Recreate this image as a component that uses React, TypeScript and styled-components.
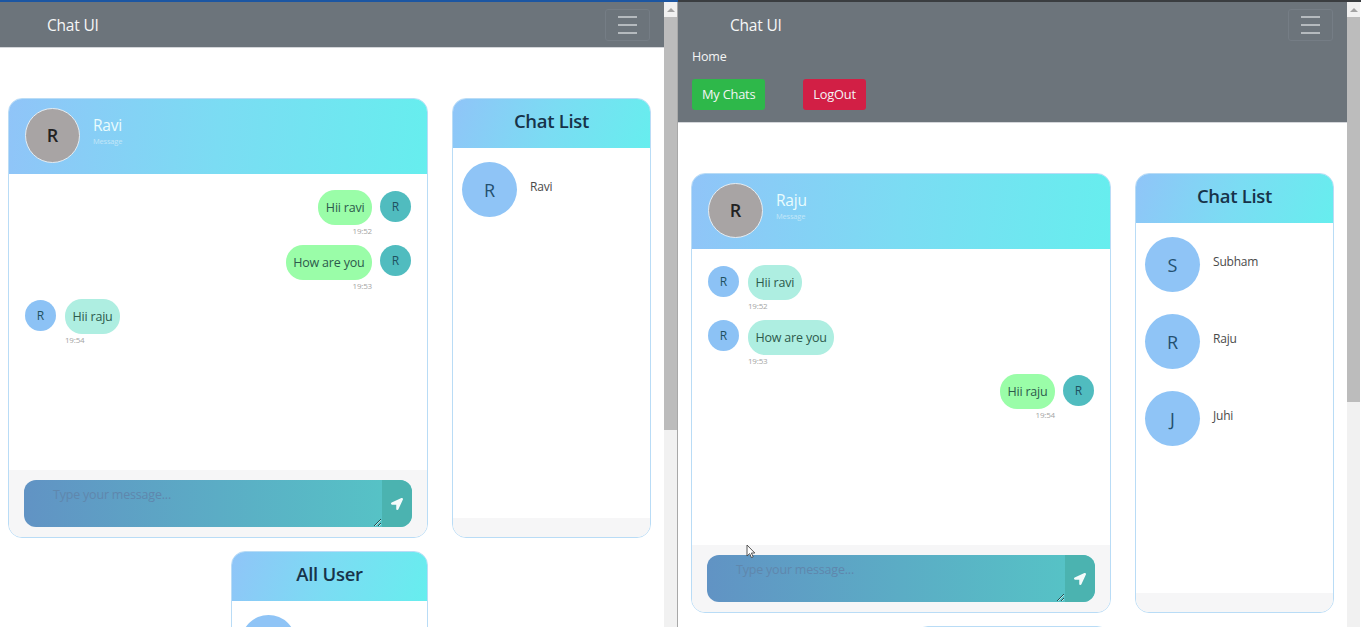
import React, { FC } from 'react'
import styled, { createGlobalStyle } from 'styled-components'
import { FaLocationArrow } from 'react-icons/fa'

const GlobalStyle = createGlobalStyle`
    html, body {
        margin: 0;
        padding: 0;
        height: 627px;
        overflow: hidden;
        background: #fff;
    }
    * {
        box-sizing: border-box;
    }
`

const Screen = styled.div`
    position: relative;
    display: grid;
    grid-template-columns: 678px 683px;
    width: 1361px;
    height: 627px;
    overflow: hidden;
    font-family: "Open Sans", "Liberation Sans", sans-serif;
`

interface PaneProps {
    $strip: string
}
const Pane = styled.div<PaneProps>`
    display: flex;
    height: 627px;
    overflow: hidden;
    border-top: 2px solid ${({ $strip }) => $strip};
`
const PageArea = styled.div`
    flex: 1;
    min-width: 0;
    overflow: hidden;
`

interface NavbarProps {
    $left: number
}
const Navbar = styled.nav<NavbarProps>`
    background: #6c747b;
    border-bottom: 1px solid #d4d6da;
    padding: 7px 14px 6px ${({ $left }) => $left}px;
`
const NavTop = styled.div`
    display: flex;
    align-items: center;
    justify-content: space-between;
    height: 32px;
    padding-left: 39px;
`
const Brand = styled.a`
    color: #f6f7f7;
    font-size: 15.5px;
    letter-spacing: -0.2px;
`
const Toggler = styled.button`
    display: flex;
    flex-direction: column;
    justify-content: center;
    gap: 6px;
    width: 45px;
    height: 32px;
    padding: 0 12px;
    background: none;
    border: 1px solid #757d85;
    border-radius: 3px;
`
const TogglerBar = styled.span`
    display: block;
    height: 2px;
    background: #b5babe;
`
const NavMenu = styled.div`
    padding: 7px 0 0 1px;
    height: 75px;
`
const NavLink = styled.a`
    display: block;
    color: #f4f5f5;
    font-size: 12.5px;
    line-height: 18px;
    letter-spacing: -0.2px;
`
const NavActions = styled.div`
    display: flex;
    gap: 38px;
    margin-top: 13px;
`

interface NavButtonProps {
    $color: string
}
const NavButton = styled.button<NavButtonProps>`
    height: 31px;
    padding: 0 10px 1px;
    border: none;
    border-radius: 3px;
    color: #f4f5f5;
    background: ${({ $color }) => $color};
    font-family: inherit;
    font-size: 12.8px;
    letter-spacing: -0.2px;
`

interface ContentProps {
    $left: number
}
const Content = styled.main<ContentProps>`
    display: grid;
    grid-template-columns: 420px 199px;
    column-gap: 24px;
    row-gap: 13px;
    padding: 50px 0 0 ${({ $left }) => $left}px;
`

const ChatCard = styled.section`
    display: flex;
    flex-direction: column;
    height: 440px;
    background: #fff;
    border: 1px solid #b9dcf6;
    border-radius: 14px;
    overflow: hidden;
`
const ChatHeader = styled.header`
    display: flex;
    align-items: center;
    gap: 13px;
    flex-shrink: 0;
    height: 76px;
    margin: -1px -1px 0;
    padding: 0 17px 2px;
    background: linear-gradient(96deg, #90c4f8 0%, #7bdcf3 50%, #66eeee 100%);
`
const HeaderAvatar = styled.div`
    display: flex;
    align-items: center;
    justify-content: center;
    width: 55px;
    height: 55px;
    border: 1px solid #e4ecf2;
    border-radius: 50%;
    background: #a8a4a4;
    color: #222;
    font-size: 18px;
    font-weight: 600;
`
const HeaderName = styled.div`
    color: #eafcfd;
    font-size: 15.5px;
    line-height: 20px;
    letter-spacing: -0.2px;
`
const HeaderNote = styled.div`
    color: #c2e6f8;
    font-size: 7.5px;
    line-height: 10px;
    margin-top: 1px;
    letter-spacing: -0.2px;
`
const HeaderText = styled.div`
    margin-top: -10px;
`

const MessageList = styled.div`
    flex: 1;
    min-height: 0;
    padding: 16px 16px 0;
`

interface SideProps {
    $mine: boolean
}
const MessageRow = styled.div<SideProps>`
    display: flex;
    flex-direction: ${({ $mine }) => ($mine ? 'row-reverse' : 'row')};
    gap: ${({ $mine }) => ($mine ? 8 : 9)}px;
    height: 54.5px;
`
const MessageAvatar = styled.div<SideProps>`
    display: flex;
    align-items: center;
    justify-content: center;
    flex-shrink: 0;
    width: 31px;
    height: 31px;
    margin-top: 0.5px;
    border-radius: 50%;
    background: ${({ $mine }) => ($mine ? '#50bcbf' : '#8cc2f5')};
    color: #1f5160;
    font-size: 12px;
`
const MessageStack = styled.div<SideProps>`
    display: flex;
    flex-direction: column;
    align-items: ${({ $mine }) => ($mine ? 'flex-end' : 'flex-start')};
`
const Bubble = styled.div<SideProps>`
    display: flex;
    align-items: center;
    height: 35px;
    padding: 0 7.5px;
    border-radius: 17px;
    background: ${({ $mine }) => ($mine ? '#9afda8' : '#aeeee1')};
    color: #2d5a4c;
    font-size: 12.5px;
    letter-spacing: -0.2px;
`
const TimeStamp = styled.span`
    margin-top: 1px;
    color: #a4a4a4;
    font-size: 8px;
    line-height: 10px;
    letter-spacing: -0.2px;
`

const ChatFooter = styled.footer`
    display: flex;
    flex-shrink: 0;
    height: 67px;
    padding: 10px 15px 0 15px;
    background: #f6f6f7;
`
const InputGroup = styled.div`
    display: flex;
    width: 389px;
    height: 47px;
    border-radius: 12px;
    overflow: hidden;
    background: linear-gradient(90deg, #6193c4 0%, #55c6c6 100%);
`
const MessageInput = styled.textarea`
    flex: 1;
    min-width: 0;
    padding: 6px 10px 0 29px;
    border: none;
    outline: none;
    background: transparent;
    font-family: inherit;
    font-size: 12.5px;
    letter-spacing: -0.2px;
    &::placeholder {
        color: #5f87ad;
        opacity: 1;
    }
`
const SendButton = styled.button`
    display: flex;
    align-items: center;
    justify-content: center;
    flex-shrink: 0;
    width: 30px;
    padding: 0 1px 0 0;
    border: none;
    background: #4bb3b0;
    color: #f4fbfb;
    font-size: 12px;
`

const ListCard = styled.section`
    display: flex;
    flex-direction: column;
    height: 440px;
    background: #fff;
    border: 1px solid #b9dcf6;
    border-radius: 14px;
    overflow: hidden;
`
const ListHeader = styled.header`
    display: flex;
    align-items: center;
    justify-content: center;
    flex-shrink: 0;
    height: 50px;
    margin: -1px -1px 0;
    padding-bottom: 6px;
    background: linear-gradient(110deg, #90c4f8 0%, #7bdcf3 50%, #66eeee 100%);
    color: #17334a;
    font-size: 18.5px;
    font-weight: 600;
    letter-spacing: -0.3px;
`
const ListBody = styled.div`
    flex: 1;
    min-height: 0;
    padding: 14px 9px 0;
`
const ListFooter = styled.div`
    flex-shrink: 0;
    height: 19px;
    background: #f6f6f7;
`
const ListItem = styled.div`
    display: flex;
    gap: 13px;
    height: 77px;
`
const ListAvatar = styled.div`
    display: flex;
    align-items: center;
    justify-content: center;
    flex-shrink: 0;
    width: 55px;
    height: 55px;
    border-radius: 50%;
    background: #8fc4f6;
    color: #24506f;
    font-size: 18px;
`
const ListName = styled.div`
    margin-top: 16px;
    color: #4a4a4a;
    font-size: 12px;
    line-height: 18px;
    letter-spacing: -0.2px;
`

const UserCardSlot = styled.div`
    justify-self: end;
    grid-column: 1;
    width: 197px;
`
const UserCard = styled(ListCard)`
    height: 300px;
`

interface ScrollbarProps {
    $edge: string
}
const Scrollbar = styled.div<ScrollbarProps>`
    display: flex;
    flex-direction: column;
    flex-shrink: 0;
    width: 14px;
    background: #f1f1f1;
    border-right: 1px solid ${({ $edge }) => $edge};
`
const ScrollArrow = styled.div`
    display: flex;
    align-items: center;
    justify-content: center;
    height: 15px;
    &::before {
        content: '';
        border-left: 4px solid transparent;
        border-right: 4px solid transparent;
        border-bottom: 4px solid #a3a3a3;
    }
`
interface ThumbProps {
    $height: number
}
const ScrollThumb = styled.div<ThumbProps>`
    height: ${({ $height }) => $height}px;
    background: #bcbcbc;
`

const Cursor = styled.svg`
    position: absolute;
    left: 746px;
    top: 544px;
    width: 10px;
    height: 15px;
`

interface Message {
    text: string
    time: string
    mine: boolean
}
interface PaneData {
    name: string
    left: number
    strip: string
    edge: string
    expanded: boolean
    thumb: number
    messages: Message[]
    contacts: string[]
}

const panes: PaneData[] = [
    {
        name: 'Ravi',
        left: 8,
        strip: '#1c56a2',
        edge: '#a8a8a8',
        expanded: false,
        thumb: 413,
        messages: [
            { text: 'Hii ravi', time: '19:52', mine: true },
            { text: 'How are you', time: '19:53', mine: true },
            { text: 'Hii raju', time: '19:54', mine: false },
        ],
        contacts: ['Ravi'],
    },
    {
        name: 'Raju',
        left: 13,
        strip: '#3a3d40',
        edge: '#ffffff',
        expanded: true,
        thumb: 385,
        messages: [
            { text: 'Hii ravi', time: '19:52', mine: false },
            { text: 'How are you', time: '19:53', mine: false },
            { text: 'Hii raju', time: '19:54', mine: true },
        ],
        contacts: ['Subham', 'Raju', 'Juhi'],
    },
]

const ChatPane: FC<{ data: PaneData }> = ({ data }) => (
    <Pane $strip={data.strip}>
        <PageArea>
            <Navbar $left={data.left}>
                <NavTop>
                    <Brand>Chat UI</Brand>
                    <Toggler aria-label="Toggle navigation">
                        <TogglerBar />
                        <TogglerBar />
                        <TogglerBar />
                    </Toggler>
                </NavTop>
                {data.expanded && (
                    <NavMenu>
                        <NavLink>Home</NavLink>
                        <NavActions>
                            <NavButton $color="#2eb84a">My Chats</NavButton>
                            <NavButton $color="#d21f45">LogOut</NavButton>
                        </NavActions>
                    </NavMenu>
                )}
            </Navbar>
            <Content $left={data.left}>
                <ChatCard>
                    <ChatHeader>
                        <HeaderAvatar>R</HeaderAvatar>
                        <HeaderText>
                            <HeaderName>{data.name}</HeaderName>
                            <HeaderNote>Message</HeaderNote>
                        </HeaderText>
                    </ChatHeader>
                    <MessageList>
                        {data.messages.map((m) => (
                            <MessageRow key={m.time} $mine={m.mine}>
                                <MessageAvatar $mine={m.mine}>R</MessageAvatar>
                                <MessageStack $mine={m.mine}>
                                    <Bubble $mine={m.mine}>{m.text}</Bubble>
                                    <TimeStamp>{m.time}</TimeStamp>
                                </MessageStack>
                            </MessageRow>
                        ))}
                    </MessageList>
                    <ChatFooter>
                        <InputGroup>
                            <MessageInput placeholder="Type your message..." />
                            <SendButton aria-label="Send">
                                <FaLocationArrow />
                            </SendButton>
                        </InputGroup>
                    </ChatFooter>
                </ChatCard>
                <ListCard>
                    <ListHeader>Chat List</ListHeader>
                    <ListBody>
                        {data.contacts.map((c) => (
                            <ListItem key={c}>
                                <ListAvatar>{c[0]}</ListAvatar>
                                <ListName>{c}</ListName>
                            </ListItem>
                        ))}
                    </ListBody>
                    <ListFooter />
                </ListCard>
                {/* the page is cut here, only the top of this card shows */}
                <UserCardSlot>
                    <UserCard>
                        <ListHeader>All User</ListHeader>
                        <ListBody>
                            <ListItem>
                                <ListAvatar />
                            </ListItem>
                        </ListBody>
                    </UserCard>
                </UserCardSlot>
            </Content>
        </PageArea>
        <Scrollbar $edge={data.edge}>
            <ScrollArrow />
            <ScrollThumb $height={data.thumb} />
        </Scrollbar>
    </Pane>
)

const App: FC = () => (
    <>
        <GlobalStyle />
        <Screen>
            {panes.map((p) => (
                <ChatPane key={p.name} data={p} />
            ))}
            <Cursor viewBox="0 0 10 15">
                <path d="M1 1 L1 12 L3.6 9.6 L5.4 13.6 L7.2 12.8 L5.4 9 L8.8 9 Z" fill="#fff" stroke="#444" strokeWidth="0.9" />
            </Cursor>
        </Screen>
    </>
)

export default App
